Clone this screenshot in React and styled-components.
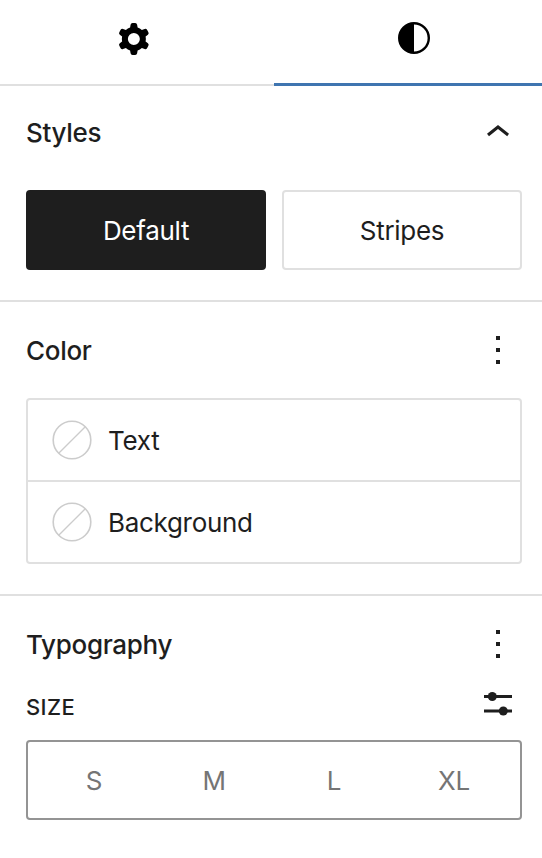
import React from 'react';
import styled, { createGlobalStyle } from 'styled-components';

const Global = createGlobalStyle`
  html, body { margin: 0; padding: 0; background: #fff; }
  body { font-family: Inter, "Noto Sans", sans-serif; color: #1e1e1e; letter-spacing: -0.3px; }
  * { box-sizing: border-box; }
`;

const Sidebar = styled.div`
  width: 542px;
  height: 858px;
  overflow: hidden;
  background: #fff;
`;

const Tabs = styled.div`
  display: grid;
  grid-template-columns: 274px 268px;
  height: 86px;
`;

const Tab = styled.div`
  display: flex;
  align-items: center;
  justify-content: center;
  height: 86px;
  color: #000;
  border-bottom: ${p => (p.$active ? '3px solid #3f75b0' : '2px solid #e0e0e0')};
  padding: ${p => (p.$active ? '0 0 8px 12px' : '1px 6px 8px 0')};
`;

const Section = styled.section`
  border-bottom: ${p => (p.$last ? '0' : '2px solid #e0e0e0')};
  padding: 0 20px 0 26px;
`;

const Header = styled.div`
  display: flex;
  align-items: center;
  justify-content: space-between;
  height: ${p => p.$h}px;
  padding-bottom: ${p => p.$pb || 0}px;
`;

const Title = styled.h2`
  margin: 0;
  font-size: 26px;
  font-weight: 500;
  line-height: 32px;
  letter-spacing: -0.3px;
  padding-top: ${p => p.$offset || 0}px;
`;

const IconSlot = styled.div`
  display: flex;
  width: 48px;
  height: 48px;
  flex: none;
`;

const StyleGrid = styled.div`
  display: grid;
  grid-template-columns: 240px 240px;
  gap: 16px;
  padding-bottom: 30px;
`;

const StyleButton = styled.div`
  height: 80px;
  display: flex;
  align-items: center;
  justify-content: center;
  font-size: 26px;
  border-radius: 4px;
  background: ${p => (p.$active ? '#1e1e1e' : '#fff')};
  color: ${p => (p.$active ? '#fff' : '#1e1e1e')};
  border: 2px solid ${p => (p.$active ? '#1e1e1e' : '#e0e0e0')};
`;

const ColorPanel = styled.div`
  width: 496px;
  height: 166px;
  border: 2px solid #e0e0e0;
  border-radius: 4px;
  margin-bottom: 30px;
`;

const ColorRow = styled.div`
  height: ${p => (p.$first ? 80 : 82)}px;
  display: flex;
  align-items: center;
  gap: 16px;
  padding-left: 24px;
  font-size: 26px;
  border-top: ${p => (p.$first ? '0' : '2px solid #e0e0e0')};
`;

const SizeHeader = styled.div`
  display: flex;
  align-items: center;
  justify-content: space-between;
  height: 30px;
  padding-right: 10px;
`;

const SizeLabel = styled.span`
  font-size: 22px;
  font-weight: 500;
  letter-spacing: 0.4px;
`;

const SizeControl = styled.div`
  display: grid;
  grid-template-columns: repeat(4, 1fr);
  width: 496px;
  height: 80px;
  margin-top: 18px;
  padding: 0 6px;
  border: 2px solid #949494;
  border-radius: 4px;
`;

const SizeOption = styled.div`
  display: flex;
  align-items: center;
  justify-content: center;
  font-size: 26px;
  color: #757575;
`;

const Cog = () => (
  <svg width="48" height="48" viewBox="0 0 24 24" fill="currentColor">
    <path fillRule="evenodd" clipRule="evenodd" d="M10.289 4.836A1 1 0 0 1 11.275 4h1.306a1 1 0 0 1 .987.836l.244 1.466c.787.26 1.503.679 2.108 1.218l1.393-.522a1 1 0 0 1 1.216.437l.653 1.13a1 1 0 0 1-.23 1.273l-1.148.944a6.025 6.025 0 0 1 0 2.435l1.149.946a1 1 0 0 1 .23 1.272l-.653 1.13a1 1 0 0 1-1.216.437l-1.394-.522c-.605.54-1.32.958-2.108 1.218l-.244 1.466a1 1 0 0 1-.987.836h-1.306a1 1 0 0 1-.986-.836l-.244-1.466a5.995 5.995 0 0 1-2.108-1.218l-1.394.522a1 1 0 0 1-1.217-.436l-.653-1.131a1 1 0 0 1 .23-1.272l1.149-.946a6.026 6.026 0 0 1 0-2.435l-1.148-.944a1 1 0 0 1-.23-1.272l.653-1.131a1 1 0 0 1 1.217-.437l1.393.522a5.994 5.994 0 0 1 2.108-1.218l.244-1.466ZM14.929 12a3 3 0 1 1-6 0 3 3 0 0 1 6 0Z" />
  </svg>
);

const Contrast = () => (
  <svg width="48" height="48" viewBox="0 0 24 24" fill="currentColor">
    <path fillRule="evenodd" clipRule="evenodd" d="M12 4a8 8 0 1 0 0 16 8 8 0 0 0 0-16Zm0 1.2a6.8 6.8 0 0 1 0 13.6V5.2Z" />
  </svg>
);

const ChevronUp = () => (
  <svg width="48" height="48" viewBox="0 0 24 24" fill="#1e1e1e">
    <path d="M6.5 12.4L12 8l5.5 4.4-.9 1.2L12 10l-4.5 3.6-1-1.2z" />
  </svg>
);

const MoreVertical = () => (
  <svg width="48" height="48" viewBox="0 0 24 24" fill="#1e1e1e">
    <path d="M13 19h-2v-2h2v2zm0-6h-2v-2h2v2zm0-6h-2V5h2v2z" />
  </svg>
);

const Sliders = () => (
  <svg width="28" height="30" viewBox="0 0 28 30" fill="#1e1e1e">
    <rect x="0" y="3" width="28" height="3" />
    <rect x="0" y="17.5" width="28" height="3" />
    <circle cx="8.3" cy="4.5" r="4.5" />
    <circle cx="19.3" cy="19" r="4.5" />
  </svg>
);

const NoColor = () => (
  <svg width="40" height="40" viewBox="0 0 40 40" fill="none" stroke="#cccccc" strokeWidth="1.6">
    <circle cx="20" cy="20" r="18.8" />
    <path d="M6.7 33.3 33.3 6.7" strokeWidth="1.3" />
  </svg>
);

export default function App() {
  return (
    <Sidebar>
      <Global />
      <Tabs>
        <Tab><Cog /></Tab>
        <Tab $active><Contrast /></Tab>
      </Tabs>
      <Section>
        <Header $h={104} $pb={10}>
          <Title>Styles</Title>
          <IconSlot><ChevronUp /></IconSlot>
        </Header>
        <StyleGrid>
          <StyleButton $active>Default</StyleButton>
          <StyleButton>Stripes</StyleButton>
        </StyleGrid>
      </Section>
      <Section>
        <Header $h={96}>
          <Title $offset={2}>Color</Title>
          <IconSlot><MoreVertical /></IconSlot>
        </Header>
        <ColorPanel>
          <ColorRow $first><NoColor />Text</ColorRow>
          <ColorRow><NoColor />Background</ColorRow>
        </ColorPanel>
      </Section>
      <Section $last>
        <Header $h={96}>
          <Title $offset={2}>Typography</Title>
          <IconSlot><MoreVertical /></IconSlot>
        </Header>
        <SizeHeader>
          <SizeLabel>SIZE</SizeLabel>
          <Sliders />
        </SizeHeader>
        <SizeControl>
          <SizeOption>S</SizeOption>
          <SizeOption>M</SizeOption>
          <SizeOption>L</SizeOption>
          <SizeOption>XL</SizeOption>
        </SizeControl>
      </Section>
    </Sidebar>
  );
}
